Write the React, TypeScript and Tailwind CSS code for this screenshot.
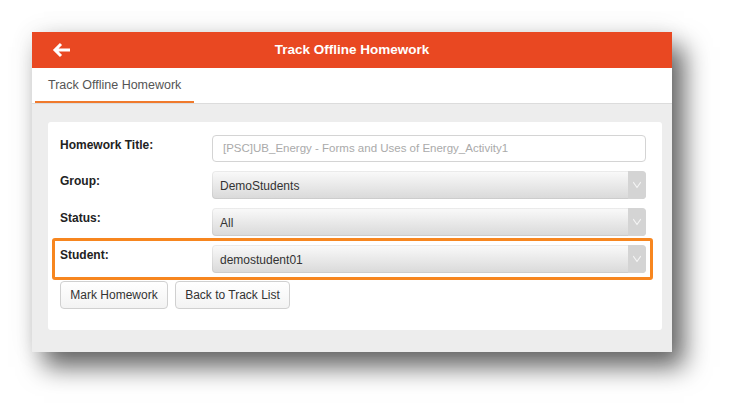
import React from "react";

const Chevron = () => (
  <svg width="10" height="8" viewBox="0 0 10 8" fill="none">
    <path d="M1.5 1.5 L5 6.5 L8.5 1.5" stroke="#f4f4f4" strokeWidth="1.2" strokeLinejoin="round" strokeLinecap="round" />
  </svg>
);

const Select = ({ value }: { value: string }) => (
  <div className="flex h-[28px] w-[434px] overflow-hidden rounded-[4px] bg-gradient-to-b from-[#fafafa] to-[#d9d9d9] shadow-[inset_0_0_0_1px_rgba(0,0,0,0.06)]">
    <div className="flex flex-1 items-center pl-[8px] pt-[2px] text-[12px] text-[#333]">{value}</div>
    <div className="flex w-[18px] items-center justify-center bg-[#d4d4d4]">
      <Chevron />
    </div>
  </div>
);

const Label = ({ children }: { children: React.ReactNode }) => (
  <div className="w-[152px] text-[12px] font-bold leading-[20px] text-[#222]">{children}</div>
);

export default function App() {
  return (
    <div
      className="h-[417px] w-[737px] overflow-hidden bg-white pl-[32px] pt-[32px]"
      style={{ fontFamily: '"Liberation Sans", Arial, sans-serif' }}
    >
      <div className="flex h-[320px] w-[640px] flex-col bg-[#ededed] shadow-[12px_15px_24px_rgba(0,0,0,0.6),0_0_24px_rgba(0,0,0,0.08)]">
        <div className="relative flex h-[36px] items-center justify-center bg-[#e94822]">
          <svg className="absolute left-[20px] top-[10px]" width="20" height="16" viewBox="0 0 20 16" fill="none">
            <path d="M18 8 H3 M9 2 L3 8 L9 14" stroke="#fff" strokeWidth="3" strokeLinecap="butt" strokeLinejoin="miter" />
          </svg>
          <span className="text-[13.5px] font-bold text-white">Track Offline Homework</span>
        </div>
        <div className="flex h-[36px] border-b border-[#dcdcdc] bg-white">
          <div className="ml-[3px] flex w-[159px] items-center border-b-2 border-[#f07a2c] pl-[13px] pt-[1px] text-[12.5px] text-[#555]">
            Track Offline Homework
          </div>
        </div>
        <div className="pl-[16px] pr-[10px] pt-[18px]">
          <div className="relative flex h-[208px] flex-col rounded-[3px] bg-white pl-[12px] pt-[13px]">
            <div className="flex flex-col gap-[9px]">
              <div className="flex">
                <Label>Homework Title:</Label>
                <div className="flex h-[27px] w-[434px] items-center rounded-[4px] border border-[#d4d4d4] bg-white pl-[10px] text-[11.5px] text-[#aaa]">
                  [PSC]UB_Energy - Forms and Uses of Energy_Activity1
                </div>
              </div>
              <div className="flex">
                <Label>Group:</Label>
                <Select value="DemoStudents" />
              </div>
              <div className="flex">
                <Label>Status:</Label>
                <Select value="All" />
              </div>
              <div className="flex">
                <Label>Student:</Label>
                <Select value="demostudent01" />
              </div>
            </div>
            <div className="mt-[8px] flex gap-[7px]">
              <button className="h-[28px] w-[108px] rounded-[4px] border border-[#d0d0d0] bg-gradient-to-b from-white to-[#f3f3f3] text-[12px] text-[#333]">
                Mark Homework
              </button>
              <button className="h-[28px] w-[115px] rounded-[4px] border border-[#d0d0d0] bg-gradient-to-b from-white to-[#f3f3f3] text-[12px] text-[#333]">
                Back to Track List
              </button>
            </div>
            <div className="pointer-events-none absolute left-[4px] top-[116px] h-[42px] w-[601px] rounded-[3px] border-[3px] border-[#f7861f]" />
          </div>
        </div>
      </div>
    </div>
  );
}
